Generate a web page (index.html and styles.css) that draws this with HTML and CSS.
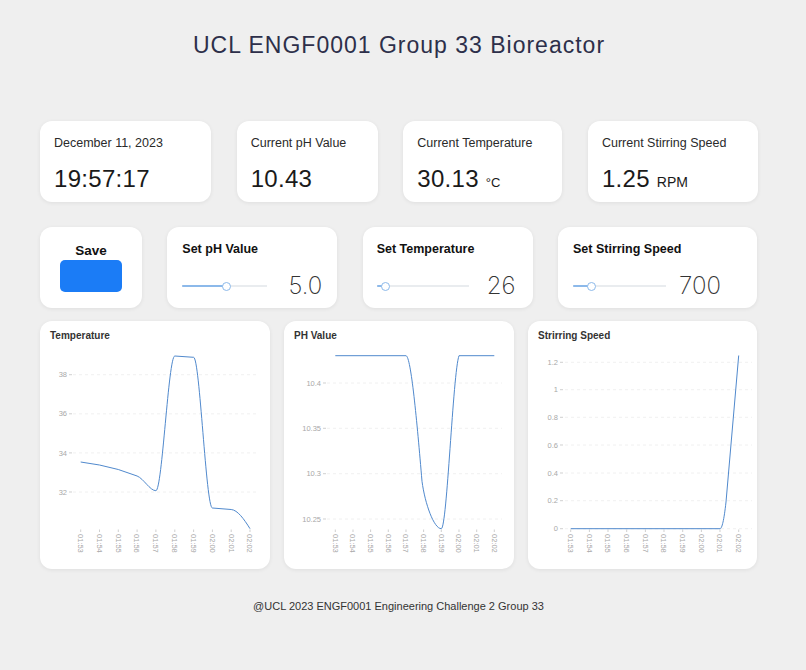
FILE: index.html
```html
<!DOCTYPE html>
<html>
<head>
<meta charset="utf-8">
<title>UCL ENGF0001 Group 33 Bioreactor</title>
<link rel="stylesheet" href="styles.css">
</head>
<body>
<h1 class="title">UCL ENGF0001 Group 33 Bioreactor</h1>
<main class="main">
  <section class="row row-stats">
    <div class="card stat stat-date">
      <div class="stat-label">December 11, 2023</div>
      <div class="stat-value">19:57:17</div>
    </div>
    <div class="card stat stat-ph">
      <div class="stat-label">Current pH Value</div>
      <div class="stat-value">10.43</div>
    </div>
    <div class="card stat stat-temp">
      <div class="stat-label">Current Temperature</div>
      <div class="stat-value">30.13 <span class="unit unit-c">°C</span></div>
    </div>
    <div class="card stat stat-speed">
      <div class="stat-label">Current Stirring Speed</div>
      <div class="stat-value">1.25 <span class="unit">RPM</span></div>
    </div>
  </section>

  <section class="row row-controls">
    <div class="card save-card">
      <div class="save-label">Save</div>
      <button class="save-btn" type="button"></button>
    </div>
    <div class="card setter setter-ph">
      <div class="setter-label">Set pH Value</div>
      <div class="setter-body">
        <div class="slider"><div class="slider-fill" style="width:44px"></div><div class="slider-thumb" style="left:44px"></div></div>
        <div class="setter-value">5.0</div>
      </div>
    </div>
    <div class="card setter setter-temp">
      <div class="setter-label">Set Temperature</div>
      <div class="setter-body">
        <div class="slider"><div class="slider-fill" style="width:9px"></div><div class="slider-thumb" style="left:9px"></div></div>
        <div class="setter-value">26</div>
      </div>
    </div>
    <div class="card setter setter-speed">
      <div class="setter-label">Set Stirring Speed</div>
      <div class="setter-body">
        <div class="slider"><div class="slider-fill" style="width:19px"></div><div class="slider-thumb" style="left:19px"></div></div>
        <div class="setter-value">700</div>
      </div>
    </div>
  </section>

  <section class="row row-charts">
    <div class="card chart">
      <div class="chart-title">Temperature</div>
      <svg class="chart-svg" width="230" height="227" viewBox="0 0 230 227">
        <g class="grid">
          <line x1="33" y1="32.7" x2="218" y2="32.7"/>
          <line x1="33" y1="71.8" x2="218" y2="71.8"/>
          <line x1="33" y1="110.9" x2="218" y2="110.9"/>
          <line x1="33" y1="150" x2="218" y2="150"/>
        </g>
        <g class="ticks">
          <line x1="29" y1="32.7" x2="32" y2="32.7"/>
          <line x1="29" y1="71.8" x2="32" y2="71.8"/>
          <line x1="29" y1="110.9" x2="32" y2="110.9"/>
          <line x1="29" y1="150" x2="32" y2="150"/>
          <line x1="40.7" y1="187.5" x2="40.7" y2="190"/>
          <line x1="59.5" y1="187.5" x2="59.5" y2="190"/>
          <line x1="78.3" y1="187.5" x2="78.3" y2="190"/>
          <line x1="97.1" y1="187.5" x2="97.1" y2="190"/>
          <line x1="115.9" y1="187.5" x2="115.9" y2="190"/>
          <line x1="134.8" y1="187.5" x2="134.8" y2="190"/>
          <line x1="153.6" y1="187.5" x2="153.6" y2="190"/>
          <line x1="172.4" y1="187.5" x2="172.4" y2="190"/>
          <line x1="191.2" y1="187.5" x2="191.2" y2="190"/>
          <line x1="210" y1="187.5" x2="210" y2="190"/>
        </g>
        <g class="ylabels">
          <text x="27" y="32.7" dy="0.35em">38</text>
          <text x="27" y="71.8" dy="0.35em">36</text>
          <text x="27" y="110.9" dy="0.35em">34</text>
          <text x="27" y="150" dy="0.35em">32</text>
        </g>
        <g class="xlabels">
          <text transform="translate(40.7,192) rotate(90)" dy="0.35em">01:53</text>
          <text transform="translate(59.5,192) rotate(90)" dy="0.35em">01:54</text>
          <text transform="translate(78.3,192) rotate(90)" dy="0.35em">01:55</text>
          <text transform="translate(97.1,192) rotate(90)" dy="0.35em">01:56</text>
          <text transform="translate(115.9,192) rotate(90)" dy="0.35em">01:57</text>
          <text transform="translate(134.8,192) rotate(90)" dy="0.35em">01:58</text>
          <text transform="translate(153.6,192) rotate(90)" dy="0.35em">01:59</text>
          <text transform="translate(172.4,192) rotate(90)" dy="0.35em">02:00</text>
          <text transform="translate(191.2,192) rotate(90)" dy="0.35em">02:01</text>
          <text transform="translate(210,192) rotate(90)" dy="0.35em">02:02</text>
        </g>
        <path class="line" d="M40.7,120 L59.5,123 L78.3,127.5 L97.1,134 C103.5,136.5 110,148.7 115.9,148.7 C122.2,148.7 128.4,14 134.8,14 L153.6,15.3 C159.8,15.3 166,166 172.4,166 L191.2,167.5 C197.5,168 204,177 210,186.7"/>
      </svg>
    </div>

    <div class="card chart">
      <div class="chart-title">PH Value</div>
      <svg class="chart-svg" width="230" height="227" viewBox="0 0 230 227">
        <g class="grid">
          <line x1="43" y1="41" x2="218" y2="41"/>
          <line x1="43" y1="86.3" x2="218" y2="86.3"/>
          <line x1="43" y1="131.7" x2="218" y2="131.7"/>
          <line x1="43" y1="177" x2="218" y2="177"/>
        </g>
        <g class="ticks">
          <line x1="39" y1="41" x2="42" y2="41"/>
          <line x1="39" y1="86.3" x2="42" y2="86.3"/>
          <line x1="39" y1="131.7" x2="42" y2="131.7"/>
          <line x1="39" y1="177" x2="42" y2="177"/>
          <line x1="51.3" y1="187.5" x2="51.3" y2="190"/>
          <line x1="69" y1="187.5" x2="69" y2="190"/>
          <line x1="86.6" y1="187.5" x2="86.6" y2="190"/>
          <line x1="104.3" y1="187.5" x2="104.3" y2="190"/>
          <line x1="122" y1="187.5" x2="122" y2="190"/>
          <line x1="139.6" y1="187.5" x2="139.6" y2="190"/>
          <line x1="157.3" y1="187.5" x2="157.3" y2="190"/>
          <line x1="175" y1="187.5" x2="175" y2="190"/>
          <line x1="192.7" y1="187.5" x2="192.7" y2="190"/>
          <line x1="210.3" y1="187.5" x2="210.3" y2="190"/>
        </g>
        <g class="ylabels">
          <text x="37" y="41" dy="0.35em">10.4</text>
          <text x="37" y="86.3" dy="0.35em">10.35</text>
          <text x="37" y="131.7" dy="0.35em">10.3</text>
          <text x="37" y="177" dy="0.35em">10.25</text>
        </g>
        <g class="xlabels">
          <text transform="translate(51.3,192) rotate(90)" dy="0.35em">01:53</text>
          <text transform="translate(69,192) rotate(90)" dy="0.35em">01:54</text>
          <text transform="translate(86.6,192) rotate(90)" dy="0.35em">01:55</text>
          <text transform="translate(104.3,192) rotate(90)" dy="0.35em">01:56</text>
          <text transform="translate(122,192) rotate(90)" dy="0.35em">01:57</text>
          <text transform="translate(139.6,192) rotate(90)" dy="0.35em">01:58</text>
          <text transform="translate(157.3,192) rotate(90)" dy="0.35em">01:59</text>
          <text transform="translate(175,192) rotate(90)" dy="0.35em">02:00</text>
          <text transform="translate(192.7,192) rotate(90)" dy="0.35em">02:01</text>
          <text transform="translate(210.3,192) rotate(90)" dy="0.35em">02:02</text>
        </g>
        <path class="line" d="M51.3,13.7 L122,13.7 C127,14 133,80 138,139.3 C141,162 150,186.7 157.3,186.7 C163,186.7 169,30 175,13.7 L210.3,13.7"/>
      </svg>
    </div>

    <div class="card chart chart-wide">
      <div class="chart-title">Strirring Speed</div>
      <svg class="chart-svg" width="229" height="227" viewBox="0 0 229 227">
        <g class="grid">
          <line x1="37" y1="20.3" x2="224" y2="20.3"/>
          <line x1="37" y1="47.7" x2="224" y2="47.7"/>
          <line x1="37" y1="75.3" x2="224" y2="75.3"/>
          <line x1="37" y1="103" x2="224" y2="103"/>
          <line x1="37" y1="131" x2="224" y2="131"/>
          <line x1="37" y1="158.7" x2="224" y2="158.7"/>
          <line x1="37" y1="186.7" x2="224" y2="186.7"/>
        </g>
        <g class="ticks">
          <line x1="32" y1="20.3" x2="35" y2="20.3"/>
          <line x1="32" y1="47.7" x2="35" y2="47.7"/>
          <line x1="32" y1="75.3" x2="35" y2="75.3"/>
          <line x1="32" y1="103" x2="35" y2="103"/>
          <line x1="32" y1="131" x2="35" y2="131"/>
          <line x1="32" y1="158.7" x2="35" y2="158.7"/>
          <line x1="32" y1="186.7" x2="35" y2="186.7"/>
          <line x1="42.7" y1="187.5" x2="42.7" y2="190"/>
          <line x1="61.4" y1="187.5" x2="61.4" y2="190"/>
          <line x1="80" y1="187.5" x2="80" y2="190"/>
          <line x1="98.7" y1="187.5" x2="98.7" y2="190"/>
          <line x1="117.4" y1="187.5" x2="117.4" y2="190"/>
          <line x1="136" y1="187.5" x2="136" y2="190"/>
          <line x1="154.7" y1="187.5" x2="154.7" y2="190"/>
          <line x1="173.4" y1="187.5" x2="173.4" y2="190"/>
          <line x1="192" y1="187.5" x2="192" y2="190"/>
          <line x1="210.7" y1="187.5" x2="210.7" y2="190"/>
        </g>
        <g class="ylabels">
          <text x="30" y="20.3" dy="0.35em">1.2</text>
          <text x="30" y="47.7" dy="0.35em">1</text>
          <text x="30" y="75.3" dy="0.35em">0.8</text>
          <text x="30" y="103" dy="0.35em">0.6</text>
          <text x="30" y="131" dy="0.35em">0.4</text>
          <text x="30" y="158.7" dy="0.35em">0.2</text>
          <text x="30" y="186.7" dy="0.35em">0</text>
        </g>
        <g class="xlabels">
          <text transform="translate(42.7,192) rotate(90)" dy="0.35em">01:53</text>
          <text transform="translate(61.4,192) rotate(90)" dy="0.35em">01:54</text>
          <text transform="translate(80,192) rotate(90)" dy="0.35em">01:55</text>
          <text transform="translate(98.7,192) rotate(90)" dy="0.35em">01:56</text>
          <text transform="translate(117.4,192) rotate(90)" dy="0.35em">01:57</text>
          <text transform="translate(136,192) rotate(90)" dy="0.35em">01:58</text>
          <text transform="translate(154.7,192) rotate(90)" dy="0.35em">01:59</text>
          <text transform="translate(173.4,192) rotate(90)" dy="0.35em">02:00</text>
          <text transform="translate(192,192) rotate(90)" dy="0.35em">02:01</text>
          <text transform="translate(210.7,192) rotate(90)" dy="0.35em">02:02</text>
        </g>
        <path class="line" d="M42.7,186.7 L192,186.7 C194,186.7 196,178 198,160 L210.7,13.5"/>
      </svg>
    </div>
  </section>
</main>
<footer class="footer">@UCL 2023 ENGF0001 Engineering Challenge 2 Group 33</footer>
</body>
</html>
```

FILE: styles.css
```css
* { box-sizing: border-box; }

body {
  margin: 0;
  background: #efefef;
  font-family: "Liberation Sans", Arial, sans-serif;
  color: #222;
}

.title {
  margin: 0;
  padding: 31px 8px 0 0;
  font-size: 23px;
  line-height: 28px;
  font-weight: normal;
  letter-spacing: 1px;
  text-align: center;
  color: #2d2f4a;
}

.main {
  margin-left: 40px;
  width: 718px;
}

.row {
  display: flex;
  justify-content: space-between;
}

.row-stats { margin-top: 62px; }
.row-controls { margin-top: 25px; width: 717px; }
.row-charts {
  margin-top: 13px;
  justify-content: flex-start;
  gap: 14px;
}

.card {
  background: #fff;
  border-radius: 12px;
  box-shadow: 0 1px 4px rgba(0, 0, 0, 0.07);
}

/* stat cards */
.stat {
  height: 81px;
  padding: 13.5px 14px 0;
}
.stat-date { width: 171px; }
.stat-ph { width: 141px; }
.stat-temp { width: 159px; }
.stat-speed { width: 170px; }

.stat-label {
  font-size: 12.5px;
  line-height: 16px;
  color: #2a2a2a;
}
.stat-value {
  margin-top: 14px;
  font-size: 24px;
  line-height: 28px;
  letter-spacing: 0.3px;
  color: #1a1a1a;
}
.unit {
  font-size: 14px;
  letter-spacing: 0;
}
.unit-c { font-size: 13px; }

/* control cards */
.save-card {
  width: 102px;
  height: 81px;
  padding-top: 16px;
  display: flex;
  flex-direction: column;
  align-items: center;
}
.save-label {
  font-size: 13.5px;
  line-height: 16px;
  font-weight: bold;
  color: #111;
}
.save-btn {
  margin-top: 1px;
  width: 62px;
  height: 32px;
  border: none;
  border-radius: 5px;
  background: #1b7cf6;
  padding: 0;
}

.setter {
  height: 81px;
  padding: 14.5px 15px 0;
}
.setter-ph { width: 170px; }
.setter-temp { width: 170px; padding-left: 14px; }
.setter-speed { width: 199px; }

.setter-label {
  font-size: 12.5px;
  line-height: 15px;
  font-weight: bold;
  color: #111;
}
.setter-body {
  margin-top: 15.5px;
  display: flex;
  align-items: center;
}
.slider {
  position: relative;
  height: 2px;
  background: #e9ecef;
}
.setter-ph .slider { width: 86px; }
.setter-temp .slider { width: 92px; }
.setter-speed .slider { width: 93px; }

.slider-fill {
  position: absolute;
  left: 0;
  top: 0;
  height: 2px;
  background: #8cb9ea;
  border-radius: 1px;
}
.slider-thumb {
  position: absolute;
  top: -3.5px;
  width: 9px;
  height: 9px;
  margin-left: -4.5px;
  border-radius: 50%;
  background: #fff;
  border: 1.2px solid #8cb9ea;
}
.setter-value {
  font-family: Inter, Lato, "Liberation Sans", sans-serif;
  font-weight: 200;
  font-size: 24px;
  line-height: 28px;
  color: #333;
}
.setter-ph .setter-value { margin-left: 22px; }
.setter-temp .setter-value { margin-left: 18px; }
.setter-speed .setter-value { margin-left: 13px; }

/* charts */
.chart {
  width: 230px;
  height: 248px;
  padding-top: 9px;
}
.chart-wide { width: 229px; }
.chart-title {
  padding-left: 10px;
  font-size: 10px;
  line-height: 12px;
  font-weight: bold;
  color: #333;
}
.chart-svg { display: block; }
.grid line {
  stroke: #ececec;
  stroke-width: 0.8;
  stroke-dasharray: 3 3;
}
.ticks line {
  stroke: #bbb;
  stroke-width: 0.7;
}
.ylabels text {
  font-family: "Liberation Sans", Arial, sans-serif;
  font-size: 7.5px;
  fill: #a8a8a8;
  text-anchor: end;
}
.xlabels text {
  font-family: "Liberation Sans", Arial, sans-serif;
  font-size: 7.5px;
  fill: #a8a8a8;
  text-anchor: start;
}
.line {
  fill: none;
  stroke: #5089cd;
  stroke-width: 1;
}

.footer {
  margin-top: 29.5px;
  padding-right: 9px;
  text-align: center;
  font-size: 11px;
  line-height: 14px;
  color: #333;
}
```
